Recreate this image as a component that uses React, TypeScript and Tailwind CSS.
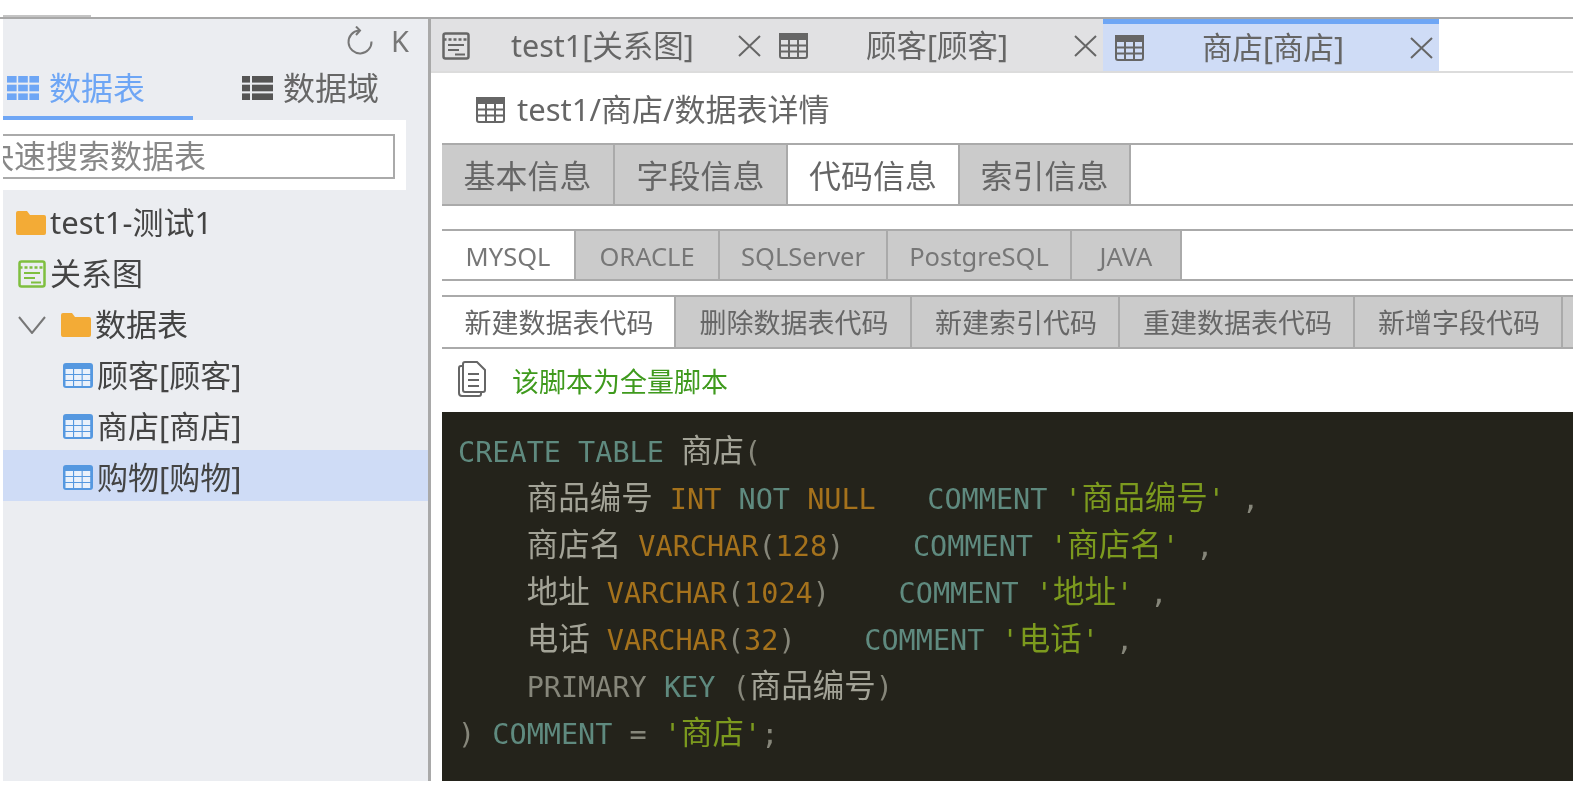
import React from "react";

const SANS = "font-['Noto_Sans','Noto_Sans_CJK_SC',sans-serif]";

function TableBlue() {
  return (
    <svg width="30" height="25" viewBox="0 0 30 25" className="shrink-0">
      <rect x="0" y="0" width="30" height="25" rx="3" fill="#5598e0" />
      {[0, 1, 2].map((r) =>
        [0, 1, 2].map((c) => (
          <rect key={`${r}-${c}`} x={2.5 + c * 8.6} y={6 + r * 6} width="7.5" height="5" fill="#eaf1fb" />
        ))
      )}
    </svg>
  );
}

function TableGray({ className = "" }: { className?: string }) {
  return (
    <svg width="29" height="26" viewBox="0 0 29 26" className={`shrink-0 ${className}`} fill="none" stroke="#666" strokeWidth="2">
      <rect x="1" y="1" width="27" height="24" rx="2" />
      <rect x="1" y="1" width="27" height="5" fill="#666" />
      <path d="M1 12.5H28M1 18.5H28M10 6V25M19 6V25" />
    </svg>
  );
}

function Relation({ color }: { color: string }) {
  return (
    <svg width="28" height="28" viewBox="0 0 28 28" fill="none" stroke={color} strokeWidth="2.5" className="shrink-0">
      <rect x="1.5" y="1.5" width="25" height="25" rx="2" />
      <path d="M1.5 7.5H26.5" strokeDasharray="3 2" />
      <path d="M6 13H22M6 18H17M13 22.5H23" strokeWidth="2" />
    </svg>
  );
}

function Folder() {
  return (
    <svg width="30" height="24" viewBox="0 0 30 24" className="shrink-0">
      <path d="M2 0H11L14 4H28a2 2 0 0 1 2 2V22a2 2 0 0 1-2 2H2a2 2 0 0 1-2-2V2a2 2 0 0 1 2-2Z" fill="#f3ab36" />
    </svg>
  );
}

function Close() {
  return (
    <svg width="25" height="24" viewBox="0 0 25 24" className="shrink-0" fill="none" stroke="#666" strokeWidth="2">
      <path d="M2 2L23 22M23 2L2 22" />
    </svg>
  );
}

function Tree({ children, className = "" }: { children: React.ReactNode; className?: string }) {
  return <div className={`flex h-[51px] items-center pt-[4px] text-[31px] text-[#444] ${className}`}>{children}</div>;
}

function T({ c, children }: { c: string; children: React.ReactNode }) {
  return <span className={c}>{children}</span>;
}

const TEAL = "text-[#5f8a7f]";
const ORANGE = "text-[#a5721c]";
const GRAY = "text-[#86867a]";
const GREEN = "text-[#7c9a1e]";

function Cjk({ c = "text-[#a3a397]", children }: { c?: string; children: React.ReactNode }) {
  return <span className={`text-[31.5px] font-['Noto_Sans_CJK_SC',sans-serif] ${c}`}>{children}</span>;
}

function CodeLine({ children }: { children: React.ReactNode }) {
  return <div className="h-[47px] leading-[47px] whitespace-pre">{children}</div>;
}

export default function App() {
  return (
    <div className={`h-[788px] w-[1582px] overflow-hidden bg-white blur-[0.6px] ${SANS}`}>
      <div className="flex h-[788px] w-[1573px] flex-col">
        <div className="h-[17px] shrink-0 pl-[3px] pt-[15px]">
          <div className="h-[2px] w-[88px] bg-[#c4c4c4]" />
        </div>
        <div className="flex h-[764px] shrink-0 border-t-2 border-[#a8a8a8]">
          <div className="w-[3px] shrink-0" />
          {/* sidebar */}
          <aside className="flex w-[428px] shrink-0 flex-col border-r-[3px] border-[#a9a9a9] bg-[#ebedf1]">
            <div className="flex h-[39px] items-start justify-end gap-[17px] pr-[19px] pt-[7px]">
              <svg width="28" height="29" viewBox="0 0 28 29" fill="none" stroke="#777" strokeWidth="2">
                <path d="M13 4.5A11.5 11.5 0 1 0 25.5 15.5" />
                <path d="M10 0.5L14 4.5L10 9" />
              </svg>
              <span className="text-[29px] leading-[29px] text-[#777]">K</span>
            </div>
            <div className="flex h-[62px] shrink-0">
              <div className="flex h-full w-[190px] items-center border-b-4 border-[#6ea6f5] pl-[4px] pt-[2px] text-[32px] text-[#6ea6f5]">
                <svg width="32" height="24" viewBox="0 0 32 24" fill="#6ea6f5" className="mr-[10px] shrink-0">
                  {[0, 1, 2].map((r) =>
                    [0, 1, 2].map((c) => <rect key={`${r}${c}`} x={c * 11.2} y={r * 8.7} width="9.6" height="6.6" />)
                  )}
                </svg>
                数据表
              </div>
              <div className="flex h-full items-center pb-[2px] pl-[49px] text-[32px] text-[#666]">
                <svg width="31" height="24" viewBox="0 0 31 24" fill="#555" className="mr-[10px] shrink-0">
                  {[0, 1, 2].map((r) => (
                    <g key={r}>
                      <rect x="0" y={r * 8.7} width="8" height="6.6" />
                      <rect x="10" y={r * 8.7} width="21" height="6.6" />
                    </g>
                  ))}
                </svg>
                数据域
              </div>
            </div>
            <div className="flex h-[70px] w-[403px] shrink-0 items-center overflow-hidden bg-white pt-[2px]">
              <div className="flex h-[45px] w-[392px] shrink-0 items-center overflow-hidden border-2 border-l-0 border-[#aaa] text-[32px] whitespace-nowrap text-[#888]">
                <span className="ml-[-21px]">快速搜索数据表</span>
              </div>
            </div>
            <div className="pt-[5px]">
              <Tree className="pl-[13px]">
                <Folder />
                <span className="ml-[4px]">test1-测试1</span>
              </Tree>
              <Tree className="pl-[15px]">
                <Relation color="#7fbf3f" />
                <span className="ml-[4px]">关系图</span>
              </Tree>
              <Tree className="pl-[15px]">
                <svg width="28" height="18" viewBox="0 0 28 18" fill="none" stroke="#777" strokeWidth="2" className="shrink-0">
                  <path d="M1 1L14 17L27 1" />
                </svg>
                <span className="ml-[15px]">
                  <Folder />
                </span>
                <span className="ml-[4px]">数据表</span>
              </Tree>
              <Tree className="pl-[60px]">
                <TableBlue />
                <span className="ml-[4px]">顾客[顾客]</span>
              </Tree>
              <Tree className="pl-[60px]">
                <TableBlue />
                <span className="ml-[4px]">商店[商店]</span>
              </Tree>
              <Tree className="bg-[#cfdcf6] pl-[60px]">
                <TableBlue />
                <span className="ml-[4px]">购物[购物]</span>
              </Tree>
            </div>
          </aside>
          {/* main */}
          <main className="flex min-w-0 flex-1 flex-col">
            <div className="flex h-[54px] shrink-0 text-[30.5px] whitespace-nowrap text-[#666]">
              <div className="flex w-[336px] shrink-0 items-center border-b-2 border-[#dcdcdc] bg-[#e1e1e3] pl-[11px] pt-[2px]">
                <Relation color="#666" />
                <span className="ml-[41px]">test1[关系图]</span>
                <span className="ml-auto mr-[5px]">
                  <Close />
                </span>
              </div>
              <div className="flex w-[336px] shrink-0 items-center border-b-2 border-[#dcdcdc] bg-[#e1e1e3] pl-[12px] pt-[2px]">
                <TableGray />
                <span className="ml-[58px]">顾客[顾客]</span>
                <span className="ml-auto mr-[5px]">
                  <Close />
                </span>
              </div>
              <div className="flex w-[336px] shrink-0 items-center border-t-[5px] border-b-2 border-t-[#6ea6f5] border-b-[#dcdcdc] bg-[#cfdcf6] pl-[12px]">
                <TableGray />
                <span className="ml-[58px]">商店[商店]</span>
                <span className="ml-auto mr-[5px]">
                  <Close />
                </span>
              </div>
              <div className="flex-1 border-b-2 border-[#dcdcdc]" />
            </div>
            <div className="min-w-0 flex-1 pl-[11px]">
              <div className="flex h-[70px] items-center pl-[34px] pt-[3px] text-[31px] whitespace-nowrap text-[#666]">
                <TableGray />
                <span className="ml-[12px]">test1/商店/数据表详情</span>
              </div>
              <div className="flex h-[63px] border-y-2 border-[#aaa] text-[32px] whitespace-nowrap text-[#666]">
                <div className="flex w-[173px] items-center justify-center border-r-2 border-[#aaa] bg-[#cbcbcb] pt-[3px]">基本信息</div>
                <div className="flex w-[173px] items-center justify-center border-r-2 border-[#aaa] bg-[#cbcbcb] pt-[3px]">字段信息</div>
                <div className="flex w-[172px] items-center justify-center border-r-2 border-[#aaa] bg-white pt-[3px]">代码信息</div>
                <div className="flex w-[171px] items-center justify-center border-r-2 border-[#aaa] bg-[#cbcbcb] pt-[3px]">索引信息</div>
              </div>
              <div className="mt-[23px] flex h-[52px] border-y-2 border-[#aaa] text-[25.5px] whitespace-nowrap text-[#777]">
                <div className="flex w-[134px] items-center justify-center border-r-2 border-[#aaa] bg-white pt-[2px]">MYSQL</div>
                <div className="flex w-[144px] items-center justify-center border-r-2 border-[#aaa] bg-[#cbcbcb] pt-[2px]">ORACLE</div>
                <div className="flex w-[168px] items-center justify-center border-r-2 border-[#aaa] bg-[#cbcbcb] pt-[2px]">SQLServer</div>
                <div className="flex w-[184px] items-center justify-center border-r-2 border-[#aaa] bg-[#cbcbcb] pt-[2px]">PostgreSQL</div>
                <div className="flex w-[110px] items-center justify-center border-r-2 border-[#aaa] bg-[#cbcbcb] pt-[2px]">JAVA</div>
              </div>
              <div className="mt-[14px] flex h-[54px] border-y-2 border-[#aaa] text-[27px] whitespace-nowrap text-[#666]">
                <div className="flex w-[234px] shrink-0 items-center justify-center border-r-2 border-[#aaa] bg-white pl-[2px] pt-[2px]">新建数据表代码</div>
                <div className="flex w-[236px] shrink-0 items-center justify-center border-r-2 border-[#aaa] bg-[#cbcbcb] pl-[2px] pt-[2px]">删除数据表代码</div>
                <div className="flex w-[208px] shrink-0 items-center justify-center border-r-2 border-[#aaa] bg-[#cbcbcb] pl-[2px] pt-[2px]">新建索引代码</div>
                <div className="flex w-[235px] shrink-0 items-center justify-center border-r-2 border-[#aaa] bg-[#cbcbcb] pl-[2px] pt-[2px]">重建数据表代码</div>
                <div className="flex w-[208px] shrink-0 items-center justify-center border-r-2 border-[#aaa] bg-[#cbcbcb] pl-[2px] pt-[2px]">新增字段代码</div>
                <div className="flex-1 bg-[#cbcbcb]" />
              </div>
              <div className="flex h-[63px] items-center pl-[16px] text-[27px] text-[#3f9a1d]">
                <svg width="28" height="36" viewBox="0 0 28 36" fill="none" stroke="#666" strokeWidth="2" className="mb-[3px] shrink-0">
                  <path d="M5 5H3a2 2 0 0 0-2 2V32a3 3 0 0 0 3 3H21a2 2 0 0 0 2-2V31" />
                  <path d="M5 3a2 2 0 0 1 2-2H19L27 9V29a2 2 0 0 1-2 2H7a2 2 0 0 1-2-2Z" />
                  <path d="M10 13H21M10 19H21M10 25H21" />
                </svg>
                <span className="ml-[26px] pt-[3px]">该脚本为全量脚本</span>
              </div>
              <div className="h-[369px] overflow-hidden bg-[#24231b] pl-[16px] pt-[13px] font-['DejaVu_Sans_Mono','Noto_Sans_CJK_SC',monospace] text-[28.5px] text-[#86867a]">
                <CodeLine>
                  <T c={TEAL}>CREATE TABLE </T>
                  <Cjk>商店</Cjk>
                  <T c={GRAY}>(</T>
                </CodeLine>
                <CodeLine>
                  {"    "}
                  <Cjk>商品编号</Cjk> <T c={ORANGE}>INT</T> <T c={TEAL}>NOT</T> <T c={ORANGE}>NULL</T>
                  {"   "}
                  <T c={TEAL}>COMMENT</T> <T c={GREEN}>'</T>
                  <Cjk c={GREEN}>商品编号</Cjk>
                  <T c={GREEN}>'</T> ,
                </CodeLine>
                <CodeLine>
                  {"    "}
                  <Cjk>商店名</Cjk> <T c={ORANGE}>VARCHAR</T>(<T c={ORANGE}>128</T>)
                  {"    "}
                  <T c={TEAL}>COMMENT</T> <T c={GREEN}>'</T>
                  <Cjk c={GREEN}>商店名</Cjk>
                  <T c={GREEN}>'</T> ,
                </CodeLine>
                <CodeLine>
                  {"    "}
                  <Cjk>地址</Cjk> <T c={ORANGE}>VARCHAR</T>(<T c={ORANGE}>1024</T>)
                  {"    "}
                  <T c={TEAL}>COMMENT</T> <T c={GREEN}>'</T>
                  <Cjk c={GREEN}>地址</Cjk>
                  <T c={GREEN}>'</T> ,
                </CodeLine>
                <CodeLine>
                  {"    "}
                  <Cjk>电话</Cjk> <T c={ORANGE}>VARCHAR</T>(<T c={ORANGE}>32</T>)
                  {"    "}
                  <T c={TEAL}>COMMENT</T> <T c={GREEN}>'</T>
                  <Cjk c={GREEN}>电话</Cjk>
                  <T c={GREEN}>'</T> ,
                </CodeLine>
                <CodeLine>
                  {"    PRIMARY "}
                  <T c={TEAL}>KEY</T> (<Cjk>商品编号</Cjk>)
                </CodeLine>
                <CodeLine>
                  ) <T c={TEAL}>COMMENT</T> = <T c={GREEN}>'</T>
                  <Cjk c={GREEN}>商店</Cjk>
                  <T c={GREEN}>'</T>;
                </CodeLine>
              </div>
            </div>
          </main>
        </div>
      </div>
    </div>
  );
}
